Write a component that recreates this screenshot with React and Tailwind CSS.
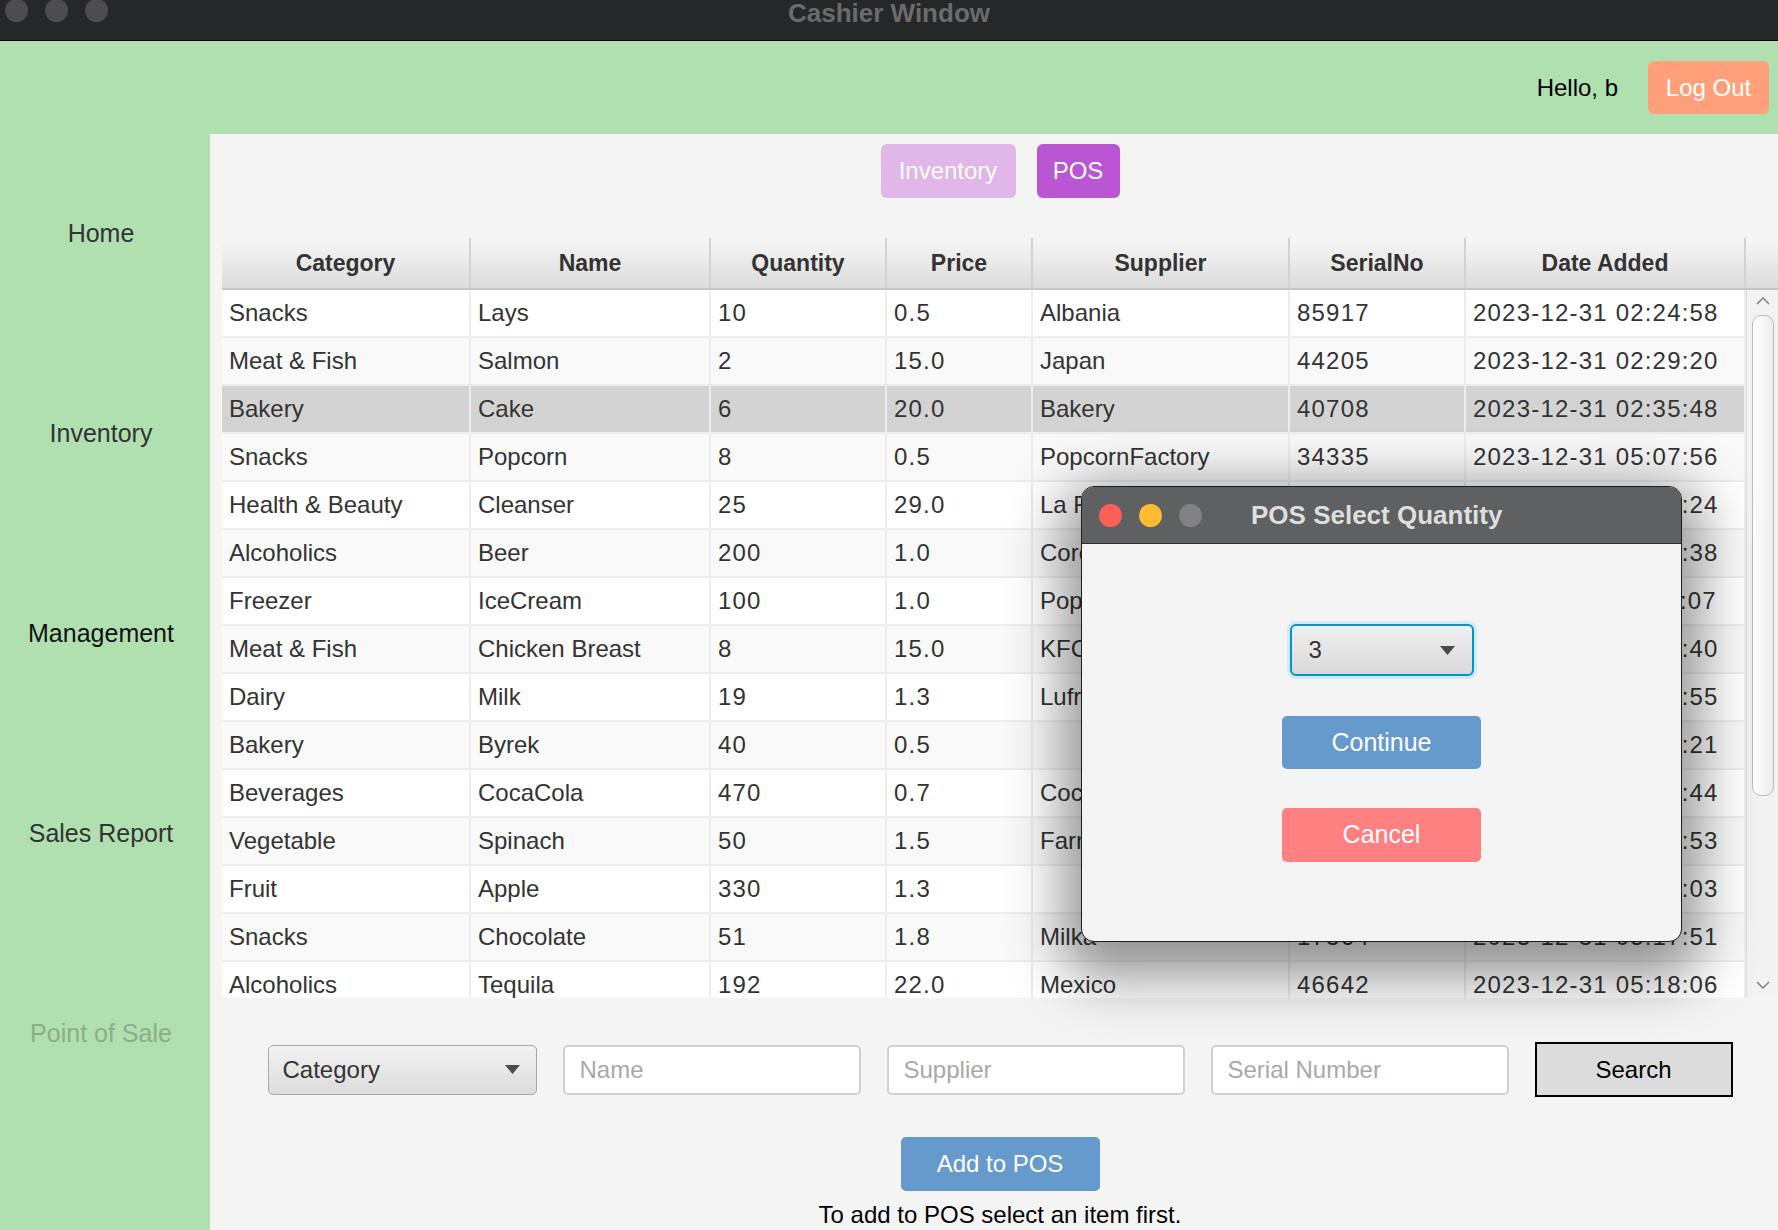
import React from "react";

const rows = [
  ["Snacks", "Lays", "10", "0.5", "Albania", "85917", "2023-12-31 02:24:58"],
  ["Meat & Fish", "Salmon", "2", "15.0", "Japan", "44205", "2023-12-31 02:29:20"],
  ["Bakery", "Cake", "6", "20.0", "Bakery", "40708", "2023-12-31 02:35:48"],
  ["Snacks", "Popcorn", "8", "0.5", "PopcornFactory", "34335", "2023-12-31 05:07:56"],
  ["Health & Beauty", "Cleanser", "25", "29.0", "La Roche-Posay", "51872", "2023-12-31 05:09:24"],
  ["Alcoholics", "Beer", "200", "1.0", "Corona", "62148", "2023-12-31 05:10:38"],
  ["Freezer", "IceCream", "100", "1.0", "PopsicleCo", "27591", "2023-12-31 05:11:07"],
  ["Meat & Fish", "Chicken Breast", "8", "15.0", "KFC", "90412", "2023-12-31 05:12:40"],
  ["Dairy", "Milk", "19", "1.3", "Lufrano", "38164", "2023-12-31 05:13:55"],
  ["Bakery", "Byrek", "40", "0.5", "", "58210", "2023-12-31 05:14:21"],
  ["Beverages", "CocaCola", "470", "0.7", "CocaCola", "73046", "2023-12-31 05:15:44"],
  ["Vegetable", "Spinach", "50", "1.5", "Farmers", "19385", "2023-12-31 05:16:53"],
  ["Fruit", "Apple", "330", "1.3", "", "66027", "2023-12-31 05:17:03"],
  ["Snacks", "Chocolate", "51", "1.8", "Milka", "17364", "2023-12-31 05:17:51"],
  ["Alcoholics", "Tequila", "192", "22.0", "Mexico", "46642", "2023-12-31 05:18:06"],
];

const headers = ["Category", "Name", "Quantity", "Price", "Supplier", "SerialNo", "Date Added"];
const numeric = [false, false, true, true, false, true, true];

function Triangle() {
  return (
    <svg width="15" height="9" viewBox="0 0 15 9">
      <polygon points="0,0 15,0 7.5,9" fill="#4a4a4a" />
    </svg>
  );
}

function Chevron({ up }) {
  return (
    <svg width="14" height="8" viewBox="0 0 14 8">
      <polyline
        points={up ? "1,7 7,1 13,7" : "1,1 7,7 13,1"}
        fill="none"
        stroke="#7a7a7a"
        strokeWidth="1.4"
      />
    </svg>
  );
}

export default function App() {
  return (
    <div
      className="relative w-[1778px] h-[1230px] overflow-hidden flex flex-col bg-[#b0e0b0] text-[#333]"
      style={{ fontFamily: '"Liberation Sans", Arial, sans-serif' }}
    >
      {/* Title bar */}
      <div className="h-[41px] shrink-0 bg-[#262729] border-b border-black flex items-start">
        <div className="w-[108px] flex gap-[17px] pl-[5px] -mt-[1px]">
          <div className="w-[23px] h-[23px] rounded-full bg-[#4d4d4f]" />
          <div className="w-[23px] h-[23px] rounded-full bg-[#4d4d4f]" />
          <div className="w-[23px] h-[23px] rounded-full bg-[#4d4d4f]" />
        </div>
        <div className="flex-1 text-center text-[26px] leading-[26px] font-bold text-[#6b6b6b]">
          Cashier Window
        </div>
        <div className="w-[108px]" />
      </div>

      {/* Header */}
      <div className="h-[93px] shrink-0 flex items-center justify-end pr-[9px]">
        <span className="text-[24px] text-black mr-[30px]">Hello, b</span>
        <div className="w-[121px] h-[53px] rounded-[6px] bg-[#ffa07a] text-white text-[24px] flex items-center justify-center">
          Log Out
        </div>
      </div>

      {/* Body */}
      <div className="flex flex-1 min-h-0">
        {/* Sidebar */}
        <div className="w-[210px] shrink-0 flex flex-col text-[25px] pr-[8px]">
          <div className="h-[200px] flex items-center justify-center text-[#333]">Home</div>
          <div className="h-[200px] flex items-center justify-center text-[#333]">Inventory</div>
          <div className="h-[200px] flex items-center justify-center text-[#111]">Management</div>
          <div className="h-[200px] flex items-center justify-center text-[#333]">Sales Report</div>
          <div className="h-[200px] flex items-center justify-center text-[#8aae8a]">Point of Sale</div>
        </div>

        {/* Content */}
        <div className="flex-1 bg-[#f4f4f4] pl-[12px] pt-[10px] flex flex-col">
          {/* toggle */}
          <div className="flex justify-center gap-[21px]">
            <div className="w-[135px] h-[54px] rounded-[6px] bg-[#e0b7e8] text-white text-[24px] flex items-center justify-center">
              Inventory
            </div>
            <div className="w-[83px] h-[54px] rounded-[6px] bg-[#ba55d3] text-white text-[24px] flex items-center justify-center">
              POS
            </div>
          </div>

          {/* Table */}
          <div className="mt-[40px] w-[1556px]">
            <div className="grid grid-cols-[249px_240px_176px_146px_257px_176px_280px_32px] h-[52px] border-b-2 border-[#c6c6c6] bg-gradient-to-b from-[#f6f6f6] to-[#dcdcdc]">
              {headers.map((h) => (
                <div
                  key={h}
                  className="border-r-2 border-[#d2d2d2] flex items-center justify-center text-[23px] font-bold text-[#333]"
                >
                  {h}
                </div>
              ))}
              <div />
            </div>
            <div className="flex h-[708px] overflow-hidden">
              <div className="w-[1524px]">
                {rows.map((r, i) => (
                  <div
                    key={i}
                    className={
                      "grid grid-cols-[249px_240px_176px_146px_257px_176px_280px] h-[48px] border-b-2 border-[#ededed] " +
                      (i === 2 ? "bg-[#d3d3d3]" : i % 2 === 0 ? "bg-white" : "bg-[#f9f9f9]")
                    }
                  >
                    {r.map((c, j) => (
                      <div
                        key={j}
                        className={
                          "border-r-2 border-[#ececec] pl-[7px] flex items-center text-[24px] text-[#333] whitespace-nowrap overflow-hidden " +
                          (numeric[j] ? "tracking-[1.2px]" : "")
                        }
                      >
                        {c}
                      </div>
                    ))}
                  </div>
                ))}
              </div>
              <div className="w-[32px] bg-[#f2f2f2] border-l border-[#dedede] flex flex-col items-center pt-[7px]">
                <Chevron up />
                <div className="mt-[10px] w-[22px] h-[481px] rounded-[9px] border border-[#bcbcbc] bg-gradient-to-r from-[#ffffff] to-[#ececec]" />
                <div className="mt-[185px]">
                  <Chevron />
                </div>
              </div>
            </div>
          </div>

          {/* Search row */}
          <div className="mt-[44px] flex justify-center items-center gap-[26px] w-[1556px] h-[55px]">
            <div className="w-[269px] h-[50px] rounded-[5px] border-[1.5px] border-[#a8a8a8] bg-gradient-to-b from-[#f2f2f2] to-[#dcdcdc] flex items-center justify-between pl-[14px] pr-[16px]">
              <span className="text-[24px] text-[#333]">Category</span>
              <Triangle />
            </div>
            <div className="w-[298px] h-[50px] rounded-[5px] border-2 border-[#d0d0d0] bg-white flex items-center pl-[15px] text-[24px] text-[#a9a9a9]">
              Name
            </div>
            <div className="w-[298px] h-[50px] rounded-[5px] border-2 border-[#d0d0d0] bg-white flex items-center pl-[15px] text-[24px] text-[#a9a9a9]">
              Supplier
            </div>
            <div className="w-[298px] h-[50px] rounded-[5px] border-2 border-[#d0d0d0] bg-white flex items-center pl-[15px] text-[24px] text-[#a9a9a9]">
              Serial Number
            </div>
            <div className="w-[198px] h-[55px] border-2 border-black bg-[#dcdcdc] flex items-center justify-center text-[24px] text-black">
              Search
            </div>
          </div>

          {/* Add to POS */}
          <div className="w-[1556px] flex flex-col items-center">
            <div className="mt-[40px] w-[199px] h-[54px] rounded-[5px] bg-[#6699cc] text-white text-[24px] flex items-center justify-center">
              Add to POS
            </div>
            <div className="mt-[12px] text-[24px] leading-[24px] text-black">
              To add to POS select an item first.
            </div>
          </div>
        </div>
      </div>

      {/* Dialog */}
      <div className="absolute left-[1081px] top-[486px] w-[601px] h-[456px] rounded-[13px] border border-[#1e1e1e] overflow-hidden bg-[#f4f4f4] shadow-[0_18px_55px_18px_rgba(0,0,0,0.42)] flex flex-col">
        <div className="h-[57px] shrink-0 bg-[#5f6062] border-b border-[#2f2f2f] flex items-center">
          <div className="flex gap-[17px] ml-[17px]">
            <div className="w-[23px] h-[23px] rounded-full bg-[#fe5f57]" />
            <div className="w-[23px] h-[23px] rounded-full bg-[#febc2e]" />
            <div className="w-[23px] h-[23px] rounded-full bg-[#828285]" />
          </div>
          <div className="ml-[49px] text-[26px] font-bold text-[#dedede]">POS Select Quantity</div>
        </div>
        <div className="flex flex-col items-center pt-[80px]">
          <div className="w-[184px] h-[52px] rounded-[6px] border-2 border-[#0094c9] shadow-[0_0_0_3px_#d2e9f3] bg-gradient-to-b from-[#f0f0f0] to-[#d9d9d9] flex items-center justify-between pl-[17px] pr-[17px]">
            <span className="text-[24px] text-[#333]">3</span>
            <Triangle />
          </div>
          <div className="mt-[40px] w-[199px] h-[53px] rounded-[5px] bg-[#6699cc] text-white text-[25px] flex items-center justify-center">
            Continue
          </div>
          <div className="mt-[39px] w-[199px] h-[54px] rounded-[5px] bg-[#ff8080] text-white text-[25px] flex items-center justify-center">
            Cancel
          </div>
        </div>
      </div>
    </div>
  );
}
